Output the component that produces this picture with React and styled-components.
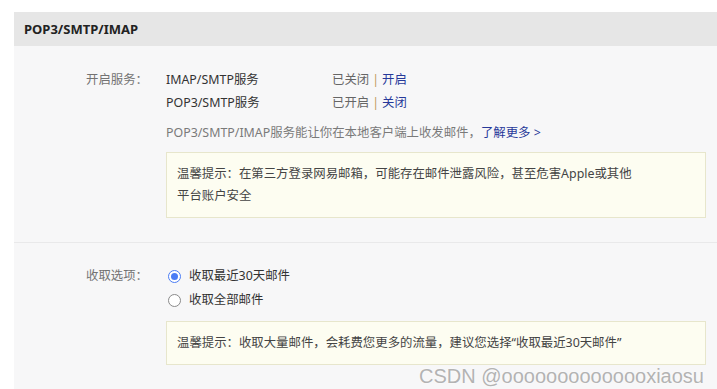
import React from "react";
import styled, { createGlobalStyle } from "styled-components";

const GlobalStyle = createGlobalStyle`
  html, body {
    margin: 0;
    padding: 0;
    background: #ffffff;
  }
  body {
    font-family: "Noto Sans", "Noto Sans CJK SC", sans-serif;
    font-size: 12.4px;
    color: #333;
  }
`;

const Page = styled.div`
  position: relative;
  width: 717px;
  height: 389px;
  overflow: hidden;
  padding: 12px 0 0 14px;
  box-sizing: border-box;
`;

const Panel = styled.div`
  width: 720px;
  background: #f7f7f8;
  height: 400px;
`;

const Header = styled.div`
  height: 34px;
  display: flex;
  align-items: center;
  padding-left: 10px;
  background: #e6e6e6;
  font-size: 13px;
  font-weight: 700;
  color: #222;
`;

const Section = styled.div`
  display: flex;
  padding: ${({ $top }) => $top}px 0 ${({ $bottom }) => $bottom}px;
  border-bottom: ${({ $divider }) => ($divider ? "1px solid #e9e9ea" : "none")};
`;

const Label = styled.div`
  width: 134px;
  flex-shrink: 0;
  text-align: right;
  line-height: 23px;
  color: #737373;
  margin-right: 18px;
`;

const Content = styled.div`
  display: flex;
  flex-direction: column;
`;

const ServiceRow = styled.div`
  display: flex;
  line-height: 23px;
  color: #333;
`;

const ServiceName = styled.div`
  width: 166px;
`;

const Status = styled.div`
  color: #666;
`;

const Sep = styled.span`
  color: #c49a5a;
  margin: 0 3px;
`;

const Link = styled.a`
  color: #27399a;
  text-decoration: none;
  cursor: pointer;
`;

const Desc = styled.div`
  margin-top: 7px;
  line-height: 23px;
  color: #7a7a7a;
`;

const Tip = styled.div`
  width: 518px;
  margin-top: ${({ $mt }) => $mt}px;
  padding: ${({ $py }) => $py}px 10px;
  background: #fdfdf1;
  border: 1px solid #e7e6cc;
  line-height: 22px;
  color: #444;
`;

const RadioRow = styled.label`
  display: flex;
  align-items: center;
  line-height: 24px;
  color: #333;
  padding-left: 2px;
`;

const RadioDot = styled.span`
  width: 13px;
  height: 13px;
  box-sizing: border-box;
  border-radius: 50%;
  border: 1px solid ${({ $checked }) => ($checked ? "#4a7cf5" : "#8a8a8a")};
  background: #fff;
  margin-right: 8px;
  display: flex;
  align-items: center;
  justify-content: center;
  &::after {
    content: "";
    width: 7px;
    height: 7px;
    border-radius: 50%;
    background: ${({ $checked }) => ($checked ? "#4a7cf5" : "transparent")};
  }
`;

const Watermark = styled.div`
  position: absolute;
  right: 13px;
  bottom: 1px;
  font-family: "Liberation Sans", Arial, sans-serif;
  font-size: 20px;
  color: #b3b3b3;
  text-shadow: 0 0 2px #fff;
  white-space: nowrap;
`;

const services = [
  { name: "IMAP/SMTP服务", state: "已关闭", action: "开启" },
  { name: "POP3/SMTP服务", state: "已开启", action: "关闭" },
];

export default function App() {
  return (
    <Page>
      <GlobalStyle />
      <Panel>
        <Header>POP3/SMTP/IMAP</Header>
        <Section $top={22} $bottom={24} $divider>
          <Label>开启服务：</Label>
          <Content>
            {services.map((s) => (
              <ServiceRow key={s.name}>
                <ServiceName>{s.name}</ServiceName>
                <Status>
                  {s.state}
                  <Sep>|</Sep>
                  <Link>{s.action}</Link>
                </Status>
              </ServiceRow>
            ))}
            <Desc>
              POP3/SMTP/IMAP服务能让你在本地客户端上收发邮件，<Link>了解更多 &gt;</Link>
            </Desc>
            <Tip $mt={8} $py={10}>
              温馨提示：在第三方登录网易邮箱，可能存在邮件泄露风险，甚至危害Apple或其他
              <br />
              平台账户安全
            </Tip>
          </Content>
        </Section>
        <Section $top={21} $bottom={20}>
          <Label>收取选项：</Label>
          <Content>
            <RadioRow>
              <RadioDot $checked />
              收取最近30天邮件
            </RadioRow>
            <RadioRow>
              <RadioDot />
              收取全部邮件
            </RadioRow>
            <Tip $mt={9} $py={10}>
              温馨提示：收取大量邮件，会耗费您更多的流量，建议您选择“收取最近30天邮件”
            </Tip>
          </Content>
        </Section>
      </Panel>
      <Watermark>CSDN @oooooooooooooxiaosu</Watermark>
    </Page>
  );
}
